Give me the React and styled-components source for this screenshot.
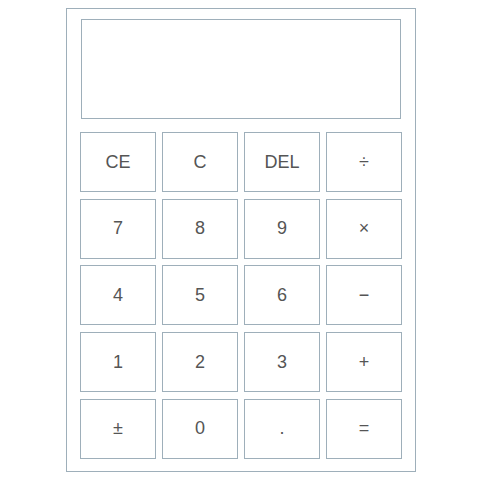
import styled, { createGlobalStyle } from "styled-components";

const Global = createGlobalStyle`
    body{
        margin: 8px;
        background: #fff;
        font-family: 'Liberation Sans', Arial, sans-serif;
    }
`

const keys = ['CE','C','DEL','÷','7','8','9','×','4','5','6','−','1','2','3','+','±','0','.','='];

export default function App(){
    return(
        <>
            <Global />
            <Calculator>
                <Display />
                <Keys>
                    {keys.map((k,i)=>
                        <Key key={i}>{k}</Key>
                    )}
                </Keys>
            </Calculator>
        </>
    )
}

const Calculator = styled.div`
    box-sizing: border-box;
    width: 350px;
    margin: 0 auto;
    border: 1px solid #9eafba;
    padding: 10px 13px 12px 13px;
`

const Display = styled.div`
    box-sizing: border-box;
    width: 320px;
    height: 100px;
    margin: 0 0 13px 1px;
    border: 1px solid #9eafba;
`

const Keys = styled.div`
    display: grid;
    grid-template-columns: repeat(4, 76px);
    grid-auto-rows: 60px;
    column-gap: 6px;
    row-gap: 6.7px;
`

const Key = styled.button`
    box-sizing: border-box;
    background: #fff;
    border: 1px solid #9eafba;
    border-radius: 0;
    padding: 0;
    font-family: 'Liberation Sans', Arial, sans-serif;
    font-size: 18px;
    color: #555;
    display: flex;
    justify-content: center;
    align-items: center;
`
